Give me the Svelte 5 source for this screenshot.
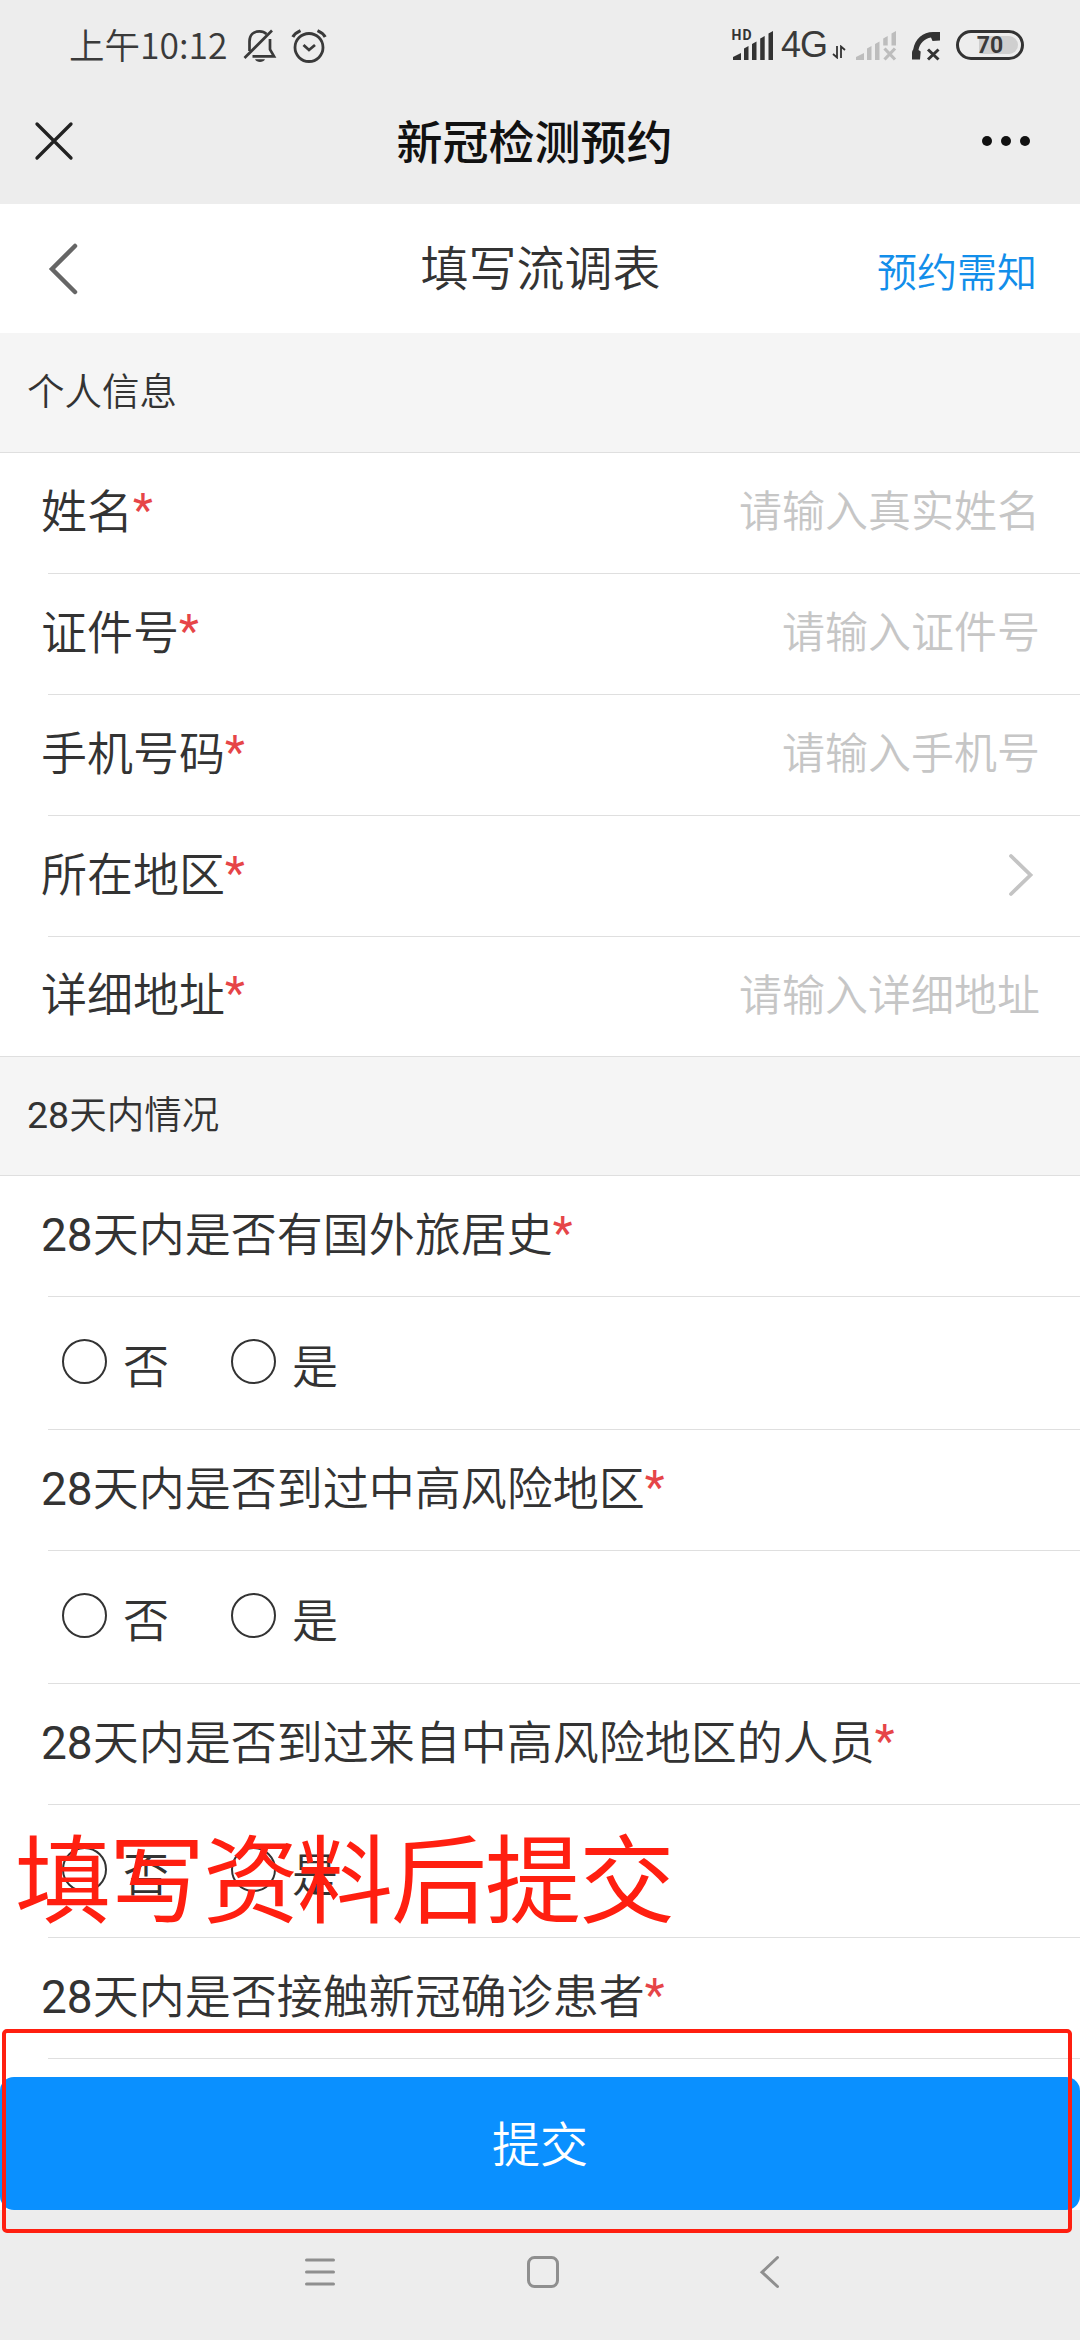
<script>
  let form = $state({name: '', idNumber: '', phone: '', address: ''});
  let answers = $state({});

  const fields = [
    {key: 'name', label: '姓名', placeholder: '请输入真实姓名'},
    {key: 'idNumber', label: '证件号', placeholder: '请输入证件号'},
    {key: 'phone', label: '手机号码', placeholder: '请输入手机号'},
    {key: 'region', label: '所在地区', picker: true},
    {key: 'address', label: '详细地址', placeholder: '请输入详细地址'}
  ];

  const questions = [
    {id: 'abroad', text: '28天内是否有国外旅居史'},
    {id: 'riskArea', text: '28天内是否到过中高风险地区'},
    {id: 'riskPeople', text: '28天内是否到过来自中高风险地区的人员'},
    {id: 'contact', text: '28天内是否接触新冠确诊患者', last: true}
  ];

  const options = ['否', '是'];
</script>

<div class="screen">
  <div class="status">
    <span class="time">上午10:12</span>
    <svg class="bell" width="34" height="36" viewBox="0 0 34 36" fill="none" stroke="#3a3a3a" stroke-width="2.7">
      <path d="M6.5 24V14.5C6.5 8 10.5 4.4 16.5 4.4c3 0 5.300 1 7 2.600M27 12v10.500l4 6.800H9.500" />
      <path d="M1.500 31L29 3.500" />
      <path d="M12 32.200h10c-1.500 3.600-8.500 3.600-10 0z" fill="#3a3a3a" stroke="none" />
    </svg>
    <svg class="alarm" width="36" height="36" viewBox="0 0 36 36" fill="none" stroke="#3a3a3a" stroke-width="2.8">
      <circle cx="18" cy="20.500" r="14" />
      <path d="M12.500 18l5.500 5 6-5" />
      <path d="M1.800 10Q4 6 9.500 3.600M34.200 10Q32 6 26.500 3.600" stroke-width="3.200" />
    </svg>
    <div class="signals">
      <svg width="44" height="34" viewBox="0 0 44 34" fill="#333">
        <text x="0.500" y="12" class="hd">HD</text>
        <path d="M2 32v-3l8-4v7zM13 32V20.500l4.500-2.500v14zM21 32V16l4.500-2.500V32zM29.200 32V10.500L33.700 8v24zM37.500 32V5.500L42 3v29z" />
      </svg>
      <span class="net">4G</span>
      <svg class="arrows" width="14" height="14" viewBox="0 0 14 14" fill="none" stroke="#333" stroke-width="1.800">
        <path d="M5 1v11.500L1 9M9 13V1.500L13 5" />
      </svg>
      <svg class="nosim" width="42" height="34" viewBox="0 0 42 34" fill="#bdbdbd">
        <path d="M0 32v-3l8-4v7zM11 32V20.500l4.500-2.500v14zM19 32V16l4.500-2.500V32zM27.200 17.500v-7L31.700 8v9.500zM35.500 17.500v-12L40 3v14.500z" />
        <path d="M28.500 20.500l10.500 11M39 20.500l-10.500 11" stroke="#bdbdbd" stroke-width="3.200" />
      </svg>
      <svg class="call" width="30" height="34" viewBox="0 0 30 34">
        <path d="M1 31.500V25c0-1.500.5-2.500 1.200-3.500C4 11 12 4 22 4h7v8.500l-7.500.500-1.500-3.500C13.500 10.500 8.500 15.500 7.500 22l2.200 1.500-.7 8z" fill="#333" />
        <path d="M17 21.500l10.500 10M27.500 21.500l-10.500 10" stroke="#333" stroke-width="3" />
      </svg>
      <div class="battery"><i></i><span>70</span></div>
    </div>
  </div>

  <div class="titlebar">
    <svg width="40" height="40" viewBox="0 0 40 40" fill="none" stroke="#222" stroke-width="3.300" stroke-linecap="round">
      <path d="M3 3l34 34M37 3L3 37" />
    </svg>
    <h1>新冠检测预约</h1>
    <svg width="50" height="12" viewBox="0 0 50 12" fill="#111">
      <circle cx="6" cy="6" r="5" /><circle cx="25" cy="6" r="5" /><circle cx="44" cy="6" r="5" />
    </svg>
  </div>

  <div class="header">
    <svg width="32" height="54" viewBox="0 0 32 54" fill="none" stroke="#666" stroke-width="4.500" stroke-linecap="round">
      <path d="M27 4L4 27l23 23" />
    </svg>
    <h2>填写流调表</h2>
    <a href="#notice">预约需知</a>
  </div>

  <main>
    <h3 class="section first">个人信息</h3>
    {#each fields as field}
      <label class="row" class:end={field.key === 'address'}>
        <span class="label">{field.label}<em>*</em></span>
        {#if field.picker}
          <svg class="chevron" width="26" height="44" viewBox="0 0 26 44" fill="none" stroke="#c4c4c4" stroke-width="3.800" stroke-linecap="round">
            <path d="M3 3l19.500 19L3 41" />
          </svg>
        {:else}
          <input placeholder={field.placeholder} bind:value={form[field.key]} />
        {/if}
      </label>
    {/each}

    <h3 class="section">28天内情况</h3>
    {#each questions as question}
      <div class="row">
        <span class="label">{question.text}<em>*</em></span>
      </div>
      {#if !question.last}
        <div class="row choices">
          {#each options as option}
            <label class="choice">
              <input type="radio" name={question.id} value={option} bind:group={answers[question.id]} />
              <span>{option}</span>
            </label>
          {/each}
        </div>
      {/if}
    {/each}
  </main>

  <button class="submit">提交</button>

  <nav>
    <svg width="32" height="34" viewBox="0 0 32 34" stroke="#8f8f8f" stroke-width="3" stroke-linecap="round">
      <path d="M2.500 5h27M2.500 17h27M2.500 29h27" />
    </svg>
    <svg class="home" width="34" height="34" viewBox="0 0 34 34" fill="none" stroke="#8f8f8f" stroke-width="3">
      <rect x="2.500" y="2.500" width="29" height="29" rx="6" />
    </svg>
    <svg width="22" height="34" viewBox="0 0 22 34" fill="none" stroke="#8f8f8f" stroke-width="3" stroke-linecap="round">
      <path d="M18.500 2.500L3 17.200l15.500 14.300" />
    </svg>
  </nav>

  <!-- tutorial annotations drawn over the page -->
  <div class="note">填写资料后提交</div>
  <div class="frame"></div>
</div>

<style>
  :global(body) {
    margin: 0;
  }

  .screen {
    position: relative;
    display: flex;
    flex-direction: column;
    width: 1080px;
    height: 2340px;
    overflow: hidden;
    background: #fff;
    color: #333;
    font-family: Roboto, "Noto Sans CJK SC DemiLight", "Noto Sans CJK SC", sans-serif;
  }

  svg {
    display: block;
    flex: none;
  }

  h1, h2, h3 {
    margin: 0;
    font-weight: inherit;
  }

  .status {
    display: flex;
    align-items: center;
    height: 90px;
    padding: 0 56px 0 69px;
    background: #ededed;
    color: #3a3a3a;
  }

  .time {
    width: 160px;
    padding-bottom: 3px;
    font: 350 35.500px/50px "Noto Sans CJK SC", sans-serif;
    white-space: nowrap;
  }

  .bell {
    margin-left: 14px;
  }

  .alarm {
    margin-left: 14px;
  }

  .signals {
    display: flex;
    align-items: center;
    margin-left: auto;
  }

  .hd {
    font: 700 14px Roboto, sans-serif;
    letter-spacing: 1px;
  }

  .net {
    width: 49px;
    margin-left: 6px;
    margin-right: 1px;
    font: 350 36px/40px "Liberation Sans", Roboto, sans-serif;
    letter-spacing: -1px;
  }

  .arrows {
    margin: 14px 10px 0 1px;
  }

  .call {
    margin-left: 13px;
  }

  .battery {
    position: relative;
    box-sizing: border-box;
    width: 68px;
    height: 30px;
    margin-left: 15px;
    border: 3px solid #333;
    border-radius: 15px;
    font: 700 23px/25px Roboto, sans-serif;
    text-align: center;
  }

  .battery i {
    position: absolute;
    top: 3px;
    right: 3px;
    width: 39px;
    height: 18px;
    border-radius: 2px 9px 9px 2px;
    background: #cfcfcf;
  }

  .battery span {
    position: relative;
  }

  .titlebar {
    display: grid;
    grid-template-columns: 1fr auto 1fr;
    align-items: center;
    box-sizing: border-box;
    height: 114px;
    padding: 0 49px 12px 34px;
    background: #ededed;
    color: #111;
  }

  .titlebar h1 {
    padding-bottom: 5px;
    padding-left: 4px;
    font-family: "Noto Sans CJK SC", sans-serif;
    font-size: 46px;
    font-weight: 500;
    line-height: 60px;
  }

  .titlebar svg:last-child {
    justify-self: end;
  }

  .header {
    display: grid;
    grid-template-columns: 1fr auto 1fr;
    align-items: center;
    height: 129px;
    padding: 0 43px 0 48px;
  }

  .header h2 {
    padding-top: 2px;
    padding-right: 4px;
    font-size: 48px;
    line-height: 64px;
  }

  .header a {
    justify-self: end;
    padding-top: 2px;
    color: #128eea;
    font-size: 40px;
    text-decoration: none;
  }

  main {
    flex: 1;
    min-height: 0;
    overflow: hidden;
  }

  .section {
    box-sizing: border-box;
    height: 119px;
    padding-left: 27px;
    border-bottom: 1px solid #dfdfdf;
    background: #f5f5f5;
    font-size: 37.500px;
    line-height: 117px;
  }

  .section.first {
    height: 120px;
    line-height: 118px;
  }

  .row {
    position: relative;
    display: flex;
    align-items: center;
    justify-content: space-between;
    box-sizing: border-box;
    height: 121px;
    padding: 0 40px 3px 41px;
  }

  .row.end {
    height: 120px;
  }

  .row::after {
    content: '';
    position: absolute;
    left: 48px;
    right: 0;
    bottom: 0;
    height: 1px;
    background: #dfdfdf;
  }

  .row.end::after {
    left: 0;
  }

  .label {
    padding-bottom: 9px;
    font-size: 46px;
    white-space: nowrap;
  }

  em {
    position: relative;
    top: -2px;
    color: #e64548;
    font-style: normal;
  }

  .row > input {
    width: 500px;
    padding: 0;
    border: 0;
    outline: 0;
    background: none;
    color: #333;
    font: inherit;
    font-size: 43px;
    text-align: right;
  }

  .row > input::placeholder {
    color: #c6c6c6;
    opacity: 1;
  }

  .chevron {
    margin-right: 6px;
  }

  .choices {
    justify-content: flex-start;
    gap: 62px;
    height: 133px;
    padding: 0 62px 4px;
  }

  .choice {
    display: flex;
    align-items: center;
    gap: 16px;
    font-size: 46px;
  }

  .choice input {
    appearance: none;
    width: 45px;
    height: 45px;
    margin: 0;
    border: 2px solid #333;
    border-radius: 50%;
  }

  .choice span {
    padding-top: 2px;
  }

  .submit {
    height: 133px;
    padding: 0 0 5px;
    border: 0;
    border-radius: 14px;
    background: #0a90ff;
    color: #fff;
    font: inherit;
    font-size: 48px;
  }

  nav {
    display: flex;
    justify-content: space-between;
    box-sizing: border-box;
    height: 130px;
    padding: 45px 299px 0 304px;
    background: #ededed;
  }

  .home {
    margin-right: 9px;
  }

  .note {
    position: absolute;
    left: 15px;
    top: 1804px;
    color: #ff1f10;
    font-family: "Noto Sans CJK SC", sans-serif;
    font-size: 96px;
    letter-spacing: -2px;
    line-height: 140px;
    white-space: nowrap;
  }

  .frame {
    position: absolute;
    left: 2px;
    top: 2029px;
    box-sizing: border-box;
    width: 1070px;
    height: 204px;
    border: 4px solid #ff1f10;
    border-radius: 5px;
  }
</style>
